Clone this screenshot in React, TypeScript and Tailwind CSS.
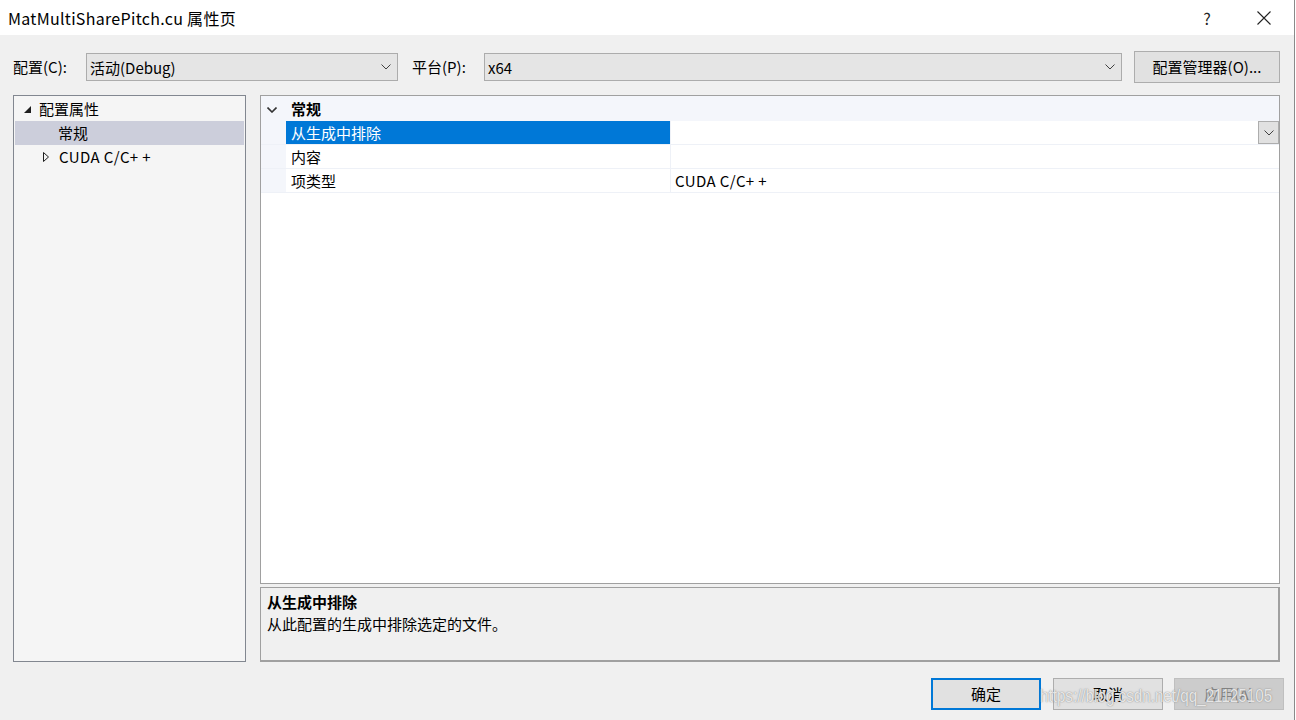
import React from "react";

const F = { fontFamily: '"Noto Sans CJK SC", "Noto Sans", sans-serif' };

function Chevron({ className = "" }: { className?: string }) {
  return (
    <svg width="10" height="6" viewBox="0 0 10 6" className={className}>
      <path d="M0.5 0.5 L5 5 L9.5 0.5" fill="none" stroke="#404040" strokeWidth="1" />
    </svg>
  );
}

function Combo({ w, text }: { w: string; text: string }) {
  return (
    <div className={`${w} h-[28px] bg-[#e5e5e5] border border-[#acacac] flex items-center justify-between pl-[3px] pr-[6px]`}>
      <span className="text-[15px] text-black leading-none">{text}</span>
      <Chevron />
    </div>
  );
}

function Btn({ children, kind }: { children: React.ReactNode; kind?: "default" | "disabled" }) {
  const cls =
    kind === "default"
      ? "border-2 border-[#0078d7] bg-[#e1e1e1] text-black"
      : kind === "disabled"
      ? "border border-[#bfbfbf] bg-[#cccccc] text-[#838383]"
      : "border border-[#adadad] bg-[#e1e1e1] text-black";
  return (
    <div className={`w-[110px] h-[32px] flex items-center justify-center text-[15px] ${cls}`}>{children}</div>
  );
}

function Cuda() {
  return (
    <span className="tracking-[0.4px]">
      CUDA C/C<span className="tracking-[4px]">++</span>
    </span>
  );
}

export default function App() {
  return (
    <div className="w-[1296px] h-[720px] bg-white overflow-hidden" style={F}>
      <div className="w-[1295px] h-[720px] border-r border-[#8a8a8a] bg-[#f0f0f0] flex flex-col relative">
        {/* title bar */}
        <div className="h-[35px] bg-white flex items-center pl-[8px] shrink-0">
          <span className="text-[16px] text-black tracking-[0.3px]">MatMultiSharePitch.cu 属性页</span>
          <div className="ml-auto flex items-center">
            <span className="text-[16px] text-[#222] w-[30px] text-center">?</span>
            <svg width="14" height="14" viewBox="0 0 14 14" className="mr-[23px] ml-[35px]">
              <path d="M0.5 0.5 L13.5 13.5 M13.5 0.5 L0.5 13.5" stroke="#222" strokeWidth="1.1" />
            </svg>
          </div>
        </div>

        {/* toolbar */}
        <div className="mt-[16px] h-[32px] flex items-center pl-[13px] shrink-0">
          <span className="text-[15px] text-black w-[73px]">配置(C):</span>
          <Combo w="w-[312px]" text="活动(Debug)" />
          <span className="text-[15px] text-black ml-[14px] w-[72px]">平台(P):</span>
          <Combo w="w-[638px]" text="x64" />
          <div className="ml-[12px] w-[146px] h-[32px] bg-[#e1e1e1] border border-[#adadad] flex items-center justify-center text-[15px] text-black">
            配置管理器(O)...
          </div>
        </div>

        {/* main */}
        <div className="mt-[12px] h-[567px] flex pl-[13px] shrink-0">
          {/* tree */}
          <div className="w-[233px] h-full bg-[#f5f5f5] border border-[#828790] pt-[1px] px-[1px] flex flex-col">
            <div className="h-[24px] flex items-center text-[15px] text-black">
              <svg width="7" height="7" viewBox="0 0 7 7" className="ml-[9px] mr-[8px]">
                <path d="M7 0 L7 7 L0 7 Z" fill="#1e1e1e" />
              </svg>
              配置属性
            </div>
            <div className="h-[24px] flex items-center text-[15px] text-black bg-[#cccedb] pl-[43px]">常规</div>
            <div className="h-[24px] flex items-center text-[15px] text-black">
              <svg width="6" height="10" viewBox="0 0 6 10" className="ml-[28px] mr-[10px]">
                <path d="M0.5 0.5 L5.5 5 L0.5 9.5 Z" fill="none" stroke="#1e1e1e" strokeWidth="1" />
              </svg>
              <Cuda />
            </div>
          </div>

          {/* right column */}
          <div className="ml-[14px] w-[1020px] flex flex-col">
            <div className="h-[489px] bg-white border border-[#a0a0a0] flex flex-col">
              <div className="h-[25px] pt-[2px] bg-[#f4f6fb] flex items-center text-[15px] font-bold text-black">
                <svg width="10" height="6" viewBox="0 0 10 6" className="ml-[6px] mr-[14px]">
                  <path d="M0.5 0.5 L5 5 L9.5 0.5" fill="none" stroke="#333" strokeWidth="1.6" />
                </svg>
                常规
              </div>
              {[
                { n: "从生成中排除", v: null, sel: true },
                { n: "内容", v: null },
                { n: "项类型", v: <Cuda /> },
              ].map((r, i) => (
                <div key={i} className="h-[24px] flex border-b border-[#eef1f7]">
                  <div className="w-[25px] bg-[#f4f6fb]" />
                  <div
                    className={`w-[385px] flex items-center pt-[2px] pl-[5px] text-[15px] border-r border-[#eef1f7] ${
                      r.sel ? "bg-[#0078d7] text-white" : "text-black"
                    }`}
                  >
                    {r.n}
                  </div>
                  <div className="flex-1 flex items-center pt-[2px] pl-[4px] text-[15px] text-black relative">
                    {r.v}
                    {r.sel && (
                      <div className="absolute right-0 top-0 w-[21px] h-[23px] bg-[#e1e1e1] border border-[#adadad] flex items-center justify-center">
                        <Chevron />
                      </div>
                    )}
                  </div>
                </div>
              ))}
              <div className="flex-1" />
            </div>
            <div className="mt-[3px] h-[75px] bg-[#f0f0f0] border border-[#a0a0a0] border-b-2 border-r-2 pl-[6px] pt-[3px] flex flex-col">
              <span className="text-[15px] font-bold text-black leading-[22px]">从生成中排除</span>
              <span className="text-[15px] text-black leading-[22px]">从此配置的生成中排除选定的文件。</span>
            </div>
          </div>
        </div>

        {/* footer */}
        <div className="mt-[16px] h-[32px] flex pl-[931px] gap-[12px] shrink-0">
          <Btn kind="default">确定</Btn>
          <Btn>取消</Btn>
          <div className="-ml-[1px]">
            <Btn kind="disabled">应用(A)</Btn>
          </div>
        </div>

        {/* watermark */}
        <div
          className="absolute left-[1040px] top-[682px] text-[19px] text-white/80 whitespace-nowrap pointer-events-none scale-x-[0.8] origin-left"
          style={{
            fontFamily: '"Liberation Sans", Arial, sans-serif',
            textShadow: "0 0 1px rgba(110,110,110,0.8), 0 0 2px rgba(140,140,140,0.5)",
          }}
        >
          https://blog.csdn.net/qq_21125105
        </div>
      </div>
    </div>
  );
}
